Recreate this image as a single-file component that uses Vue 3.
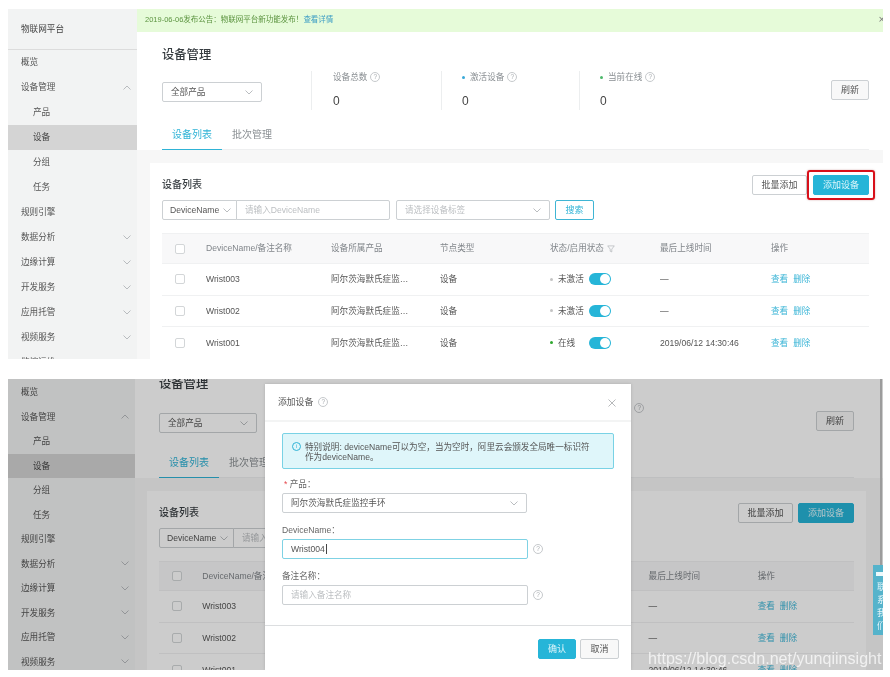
<script setup>
const panels = [
  { key: 'upper', notice: true, brand: true, dialog: false },
  { key: 'lower', notice: false, brand: false, dialog: true },
]
const navItems = [
  { label: '概览' },
  { label: '设备管理', chevron: 'up' },
  { label: '产品', sub: true },
  { label: '设备', sub: true, active: true },
  { label: '分组', sub: true },
  { label: '任务', sub: true },
  { label: '规则引擎' },
  { label: '数据分析', chevron: 'down' },
  { label: '边缘计算', chevron: 'down' },
  { label: '开发服务', chevron: 'down' },
  { label: '应用托管', chevron: 'down' },
  { label: '视频服务', chevron: 'down' },
  { label: '监控运维', chevron: 'down' },
]
const stats = [
  { label: '设备总数', dot: '' },
  { label: '激活设备', dot: 'blue' },
  { label: '当前在线', dot: 'green' },
]
const devices = [
  { name: 'Wrist003', status: '未激活', dot: 'grey', time: '—' },
  { name: 'Wrist002', status: '未激活', dot: 'grey', time: '—' },
  { name: 'Wrist001', status: '在线', dot: 'online', time: '2019/06/12 14:30:46' },
]
const product = '阿尔茨海默氏症监控手环'
</script>

<template>
  <div class="page">
    <section v-for="p in panels" :key="p.key" class="console" :class="p.key">
      <aside class="side">
        <div v-if="p.brand" class="brand">物联网平台</div>
        <div
          v-for="n in navItems"
          :key="n.label"
          class="nav"
          :class="{ sub: n.sub, active: n.active }"
        >
          <span>{{ n.label }}</span>
          <svg v-if="n.chevron" class="chev nav-chev" :class="n.chevron" viewBox="0 0 8 5"><path d="M.5.5 4 4 7.5.5" /></svg>
        </div>
      </aside>

      <main class="main">
        <div v-if="p.notice" class="notice">
          <span>2019-06-06发布公告：物联网平台新功能发布！</span>
          <a class="more">查看详情</a>
          <span class="notice-x">×</span>
        </div>

        <header class="head">
          <h1 class="title">设备管理</h1>
          <div class="summary">
            <div class="select product-select"><span>全部产品</span><svg class="chev" viewBox="0 0 8 5"><path d="M.5.5 4 4 7.5.5" /></svg></div>
            <div class="stats">
              <div v-for="s in stats" :key="s.label" class="stat">
                <div class="stat-label">
                  <i v-if="s.dot" class="dot" :class="s.dot"></i>
                  <span>{{ s.label }}</span>
                  <span class="help">?</span>
                </div>
                <div class="stat-value">0</div>
              </div>
            </div>
            <button class="btn refresh">刷新</button>
          </div>
          <div class="tabs">
            <div class="tab on">设备列表</div>
            <div class="tab">批次管理</div>
          </div>
        </header>

        <div class="body">
          <div class="card">
            <div class="card-head">
              <h2 class="card-title">设备列表</h2>
              <div class="actions">
                <button class="btn batch">批量添加</button>
                <span class="mark"><button class="btn primary">添加设备</button></span>
              </div>
            </div>

            <div class="filters">
              <div class="select name-select"><span>DeviceName</span><svg class="chev" viewBox="0 0 8 5"><path d="M.5.5 4 4 7.5.5" /></svg></div>
              <div class="field name-input">请输入DeviceName</div>
              <div class="select tag-select"><span class="ph">请选择设备标签</span><svg class="chev" viewBox="0 0 8 5"><path d="M.5.5 4 4 7.5.5" /></svg></div>
              <button class="btn search">搜索</button>
            </div>

            <div class="table">
              <div class="tr th">
                <span class="td"><i class="check"></i></span>
                <span class="td">DeviceName/备注名称</span>
                <span class="td">设备所属产品</span>
                <span class="td">节点类型</span>
                <span class="td">状态/启用状态
                  <svg class="funnel" viewBox="0 0 9 9"><path d="M.8 1h7.4L5.4 4.6v3.2L3.6 7V4.6z" /></svg>
                </span>
                <span class="td">最后上线时间</span>
                <span class="td">操作</span>
              </div>
              <div v-for="d in devices" :key="d.name" class="tr">
                <span class="td"><i class="check"></i></span>
                <span class="td">{{ d.name }}</span>
                <span class="td"><span class="clip">{{ product }}</span></span>
                <span class="td">设备</span>
                <span class="td status">
                  <i class="dot" :class="d.dot"></i>
                  <span class="status-text">{{ d.status }}</span>
                  <i class="toggle"></i>
                </span>
                <span class="td">{{ d.time }}</span>
                <span class="td links"><a>查看</a><a>删除</a></span>
              </div>
            </div>
          </div>
        </div>
      </main>

      <template v-if="p.dialog">
        <div class="mask"></div>
        <div class="scrollbar"></div>
        <div class="modal">
          <div class="modal-head">
            <span>添加设备</span>
            <span class="help">?</span>
            <svg class="close" viewBox="0 0 8 8"><path d="M.5.5l7 7M7.5.5l-7 7" /></svg>
          </div>
          <div class="modal-body">
            <div class="alert">
              <span class="alert-icon">i</span>
              <p>特别说明: deviceName可以为空，当为空时，阿里云会颁发全局唯一标识符<br />作为deviceName。</p>
            </div>
            <label class="label first"><em>*</em> 产品：</label>
            <div class="select wide"><span>{{ product }}</span><svg class="chev" viewBox="0 0 8 5"><path d="M.5.5 4 4 7.5.5" /></svg></div>
            <label class="label">DeviceName：</label>
            <div class="form-row">
              <div class="field focus">Wrist004<i class="caret"></i></div>
              <span class="help">?</span>
            </div>
            <label class="label">备注名称：</label>
            <div class="form-row">
              <div class="field">请输入备注名称</div>
              <span class="help">?</span>
            </div>
          </div>
          <div class="modal-foot">
            <button class="btn primary">确认</button>
            <button class="btn cancel">取消</button>
          </div>
        </div>
        <div class="contact">
          <i class="contact-icon"></i>
          <span>联</span><span>系</span><span>我</span><span>们</span>
        </div>
        <div class="watermark">https://blog.csdn.net/yunqiinsight</div>
      </template>
    </section>
  </div>
</template>

<style>
html, body { margin: 0; background: #fff; }
</style>

<style scoped>
.page {
  width: 890px;
  height: 677px;
  box-sizing: border-box;
  padding: 9px 0 0 8px;
  display: flex;
  flex-direction: column;
  gap: 20px;
  overflow: hidden;
  filter: blur(.45px);
  font: 8.6px/1.2 "Liberation Sans", "Noto Sans CJK SC", sans-serif;
  color: #555;
  background: #fff;
}
.console {
  position: relative;
  display: flex;
  width: 875px;
  overflow: hidden;
  background: #fff;
}
.upper { height: 350px; }
.lower { height: 291px; }

/* sidebar */
.side { flex: none; background: #f2f3f3; width: 129px; }
.lower .side { width: 127px; padding-top: 1px; }
.brand {
  height: 40px;
  line-height: 41px;
  padding-left: 13px;
  border-bottom: 1px solid #dcdcdc;
  color: #444;
}
.nav {
  display: flex;
  align-items: center;
  justify-content: space-between;
  height: 25px;
  padding: 0 6px 0 13px;
  color: #555;
}
.lower .nav { height: 24.5px; }
.nav.sub { padding-left: 25px; }
.nav.active { background: #d4d4d4; color: #444; }
.chev { width: 8px; height: 5px; fill: none; stroke: #a8acb0; stroke-width: .8; flex: none; }
.nav-chev.up { transform: rotate(180deg); }

/* main */
.main { flex: 1; min-width: 0; display: flex; flex-direction: column; }
.notice {
  flex: none;
  position: relative;
  height: 23px;
  line-height: 21px;
  padding-left: 8px;
  background: #e6fbd9;
  color: #5c9440;
  font-size: 7.5px;
}
.more { color: #3f9fc4; }
.notice-x { position: absolute; right: -2px; top: 0; color: #777; font-size: 11px; }

.head { padding: 13px 14px 0 25px; flex: none; }
.lower .head { padding: 0 29px 0 24px; margin-top: -5px; }
.title { margin: 0; font-size: 12.3px; line-height: 20px; font-weight: 500; color: #373d41; }

.summary { display: flex; align-items: center; margin-top: 6px; height: 39px; }
.lower .summary { margin-top: 8px; }
.select, .field {
  box-sizing: border-box;
  display: flex;
  align-items: center;
  height: 20px;
  padding: 0 8px;
  background: #fff;
  border: 1px solid #ccd0d3;
  border-radius: 2px;
  color: #555;
}
.select { justify-content: space-between; }
.product-select { width: 100px; flex: none; margin-top: 3px; }
.lower .product-select { width: 98px; }
.stats { display: flex; margin-left: 49px; flex: 1; height: 39px; }
.stat {
  box-sizing: border-box;
  border-left: 1px solid #eceeef;
  padding-left: 20px;
  width: 130px;
}
.stat:first-child { padding-left: 21px; }
.stat:nth-child(2) { width: 138px; }
.stat:last-child { width: auto; }
.lower .stat { width: 128px; }
.lower .stat:nth-child(2) { width: 134px; }
.stat-label { display: flex; align-items: center; gap: 3px; height: 12px; color: #8a8f93; }
.stat-value { margin-top: 11px; font-size: 12px; line-height: 14px; color: #444; }
.dot { width: 3px; height: 3px; border-radius: 50%; flex: none; margin-right: 2px; }
.dot.blue { background: #39a9d8; }
.dot.green { background: #4cb86a; }
.dot.grey { background: #c4c4c4; }
.dot.online { background: #2fa82f; }
.help {
  box-sizing: border-box;
  display: inline-flex;
  align-items: center;
  justify-content: center;
  width: 10px;
  height: 10px;
  border: .7px solid #c6c9cc;
  border-radius: 50%;
  color: #a8acb0;
  font-size: 6.5px;
  line-height: 1;
  flex: none;
}

.btn {
  box-sizing: border-box;
  height: 20px;
  padding: 0;
  border: 1px solid #ccd0d3;
  border-radius: 2px;
  background: #fff;
  color: #555;
  font: inherit;
  font-size: 9px;
}
.refresh { width: 38px; flex: none; margin-top: -1px; background: #f8f8f8; }
.primary { background: #26b5d8; border-color: #26b5d8; color: #dff6fb; width: 56px; }

.tabs { display: flex; margin-top: 12px; border-bottom: 1px solid #eeeff0; }
.lower .tabs { margin-top: 9px; }
.tab {
  box-sizing: border-box;
  width: 60px;
  height: 28px;
  padding-top: 7px;
  text-align: center;
  font-size: 10px;
  color: #8a8f93;
  margin-bottom: -1px;
}
.tab.on { color: #2fb3d6; border-bottom: 1px solid #2fb3d6; }

.body { flex: 1; background: #f7f7f7; padding: 13px 0 0 13px; min-height: 0; }
.lower .body { padding: 13px 17px 0 12px; }
.card { background: #fff; height: 100%; box-sizing: border-box; padding: 12px 14px 0 12px; }
.lower .card { padding-right: 12px; }
.card-head { display: flex; align-items: center; justify-content: space-between; height: 20px; }
.card-title { margin: 0; font-size: 10px; font-weight: 500; color: #373d41; }
.actions { display: flex; align-items: center; gap: 6px; }
.lower .actions { gap: 5px; }
.batch { width: 55px; }
.mark { position: relative; display: block; height: 20px; }
.upper .mark::after {
  content: "";
  position: absolute;
  inset: -5px -6px;
  border: 2px solid #d8101a;
  border-radius: 3px;
  box-shadow: 0 0 2px rgba(120, 0, 0, .35);
}

.filters { display: flex; margin-top: 5px; }
.name-select { width: 75px; flex: none; border-radius: 2px 0 0 2px; padding-right: 5px; padding-left: 7px; }
.name-input { width: 154px; flex: none; margin-left: -1px; border-radius: 0 2px 2px 0; color: #bcbfc2; }
.tag-select { width: 154px; flex: none; margin-left: 6px; }
.ph { color: #bcbfc2; }
.search { width: 39px; margin-left: 5px; border-color: #3fb5d4; color: #2fb3d6; }

.table { margin-top: 13px; }
.tr {
  display: grid;
  grid-template-columns: 44fr 125fr 109fr 110fr 110fr 111fr 98fr;
  align-items: center;
  height: 31.6px;
  border-bottom: 1px solid #f0f1f2;
  box-sizing: border-box;
}
.tr:last-child { border-bottom: 0; }
.th { height: 31px; background: #f8f8f9; color: #80858a; border-top: 1px solid #f0f1f2; }
.lower .th { height: 30px; }
.td { display: flex; align-items: center; white-space: nowrap; min-width: 0; gap: 3px; }
.td:first-child { padding-left: 13px; }
.clip { display: block; width: 79px; overflow: hidden; text-overflow: ellipsis; }
.check {
  box-sizing: border-box;
  display: block;
  width: 10px;
  height: 10px;
  background: #fff;
  border: 1px solid #d3d6d8;
  border-radius: 2px;
}
.funnel { width: 8px; height: 8px; fill: none; stroke: #a8acb0; stroke-width: .7; }
.status { gap: 0; }
.status .dot { margin-right: 5px; }
.status-text { width: 31px; }
.toggle {
  position: relative;
  display: block;
  width: 22px;
  height: 12px;
  border-radius: 6px;
  background: #26b5d8;
}
.toggle::after {
  content: "";
  position: absolute;
  top: 1px;
  right: 1px;
  width: 10px;
  height: 10px;
  border-radius: 50%;
  background: #fff;
}
.links { gap: 5px; color: #38b4d6; }

/* dialog layer */
.mask { position: absolute; inset: 0; background: rgba(0, 0, 0, .2); }
.scrollbar { position: absolute; top: 0; right: 1px; width: 2px; height: 186px; background: #9c9c9c; }
.modal {
  position: absolute;
  left: 257px;
  top: 5px;
  width: 366px;
  height: 286px;
  background: #fff;
  box-shadow: 0 0 3px rgba(0, 0, 0, .15);
}
.modal-head {
  position: relative;
  display: flex;
  align-items: center;
  gap: 5px;
  height: 36px;
  padding-left: 13px;
  border-bottom: 2px solid #f3f4f4;
  font-size: 8.8px;
  color: #555;
}
.close {
  position: absolute;
  right: 15px;
  top: 15px;
  width: 8px;
  height: 8px;
  fill: none;
  stroke: #a4a7aa;
  stroke-width: .8;
}
.modal-body { padding: 11px 17px 0; height: 204px; box-sizing: border-box; border-bottom: 1px solid #dcdee0; }
.alert {
  box-sizing: border-box;
  display: flex;
  height: 36px;
  padding: 8px 9px;
  background: #dff6fa;
  border: 1px solid #79d2e5;
  border-radius: 2px;
}
.alert p { margin: 0; line-height: 10px; color: #555; white-space: nowrap; }
.alert-icon {
  box-sizing: border-box;
  flex: none;
  width: 9px;
  height: 9px;
  margin: 0 4px 0 0;
  border: 1px solid #2fb3d6;
  border-radius: 50%;
  color: #2fb3d6;
  font-size: 6px;
  line-height: 7px;
  text-align: center;
}
.label { display: block; height: 10px; line-height: 10px; margin: 12px 0 4px; color: #666; }
.label.first { margin-top: 10px; }
.label em { color: #e5484d; font-style: normal; padding-left: 2px; }
.wide { width: 245px; }
.form-row { display: flex; align-items: center; gap: 5px; }
.form-row .field { width: 246px; color: #bcbfc2; }
.form-row .field.focus { color: #555; border-color: #7fd2e4; }
.caret { display: block; width: 1px; height: 10px; background: #444; margin-left: 1px; }
.modal-foot { display: flex; justify-content: flex-end; gap: 4px; padding: 13px 12px 0 0; }
.modal-foot .primary { width: 38px; }
.cancel { width: 39px; background: #f8f8f8; }

.contact {
  position: absolute;
  top: 186px;
  right: 0;
  box-sizing: border-box;
  width: 10px;
  height: 70px;
  padding: 5px 0 0 4px;
  overflow: hidden;
  display: flex;
  flex-direction: column;
  background: #55b3cb;
  color: #e6f6fa;
  font-size: 9px;
  line-height: 13px;
  white-space: nowrap;
}
.contact-icon { display: block; width: 7px; height: 4px; margin: 2px 0 5px -1px; background: #eef9fb; flex: none; }
.watermark {
  position: absolute;
  left: 640px;
  top: 269px;
  font-size: 16.1px;
  line-height: 20px;
  white-space: nowrap;
  color: rgba(255, 255, 255, .72);
}
</style>
